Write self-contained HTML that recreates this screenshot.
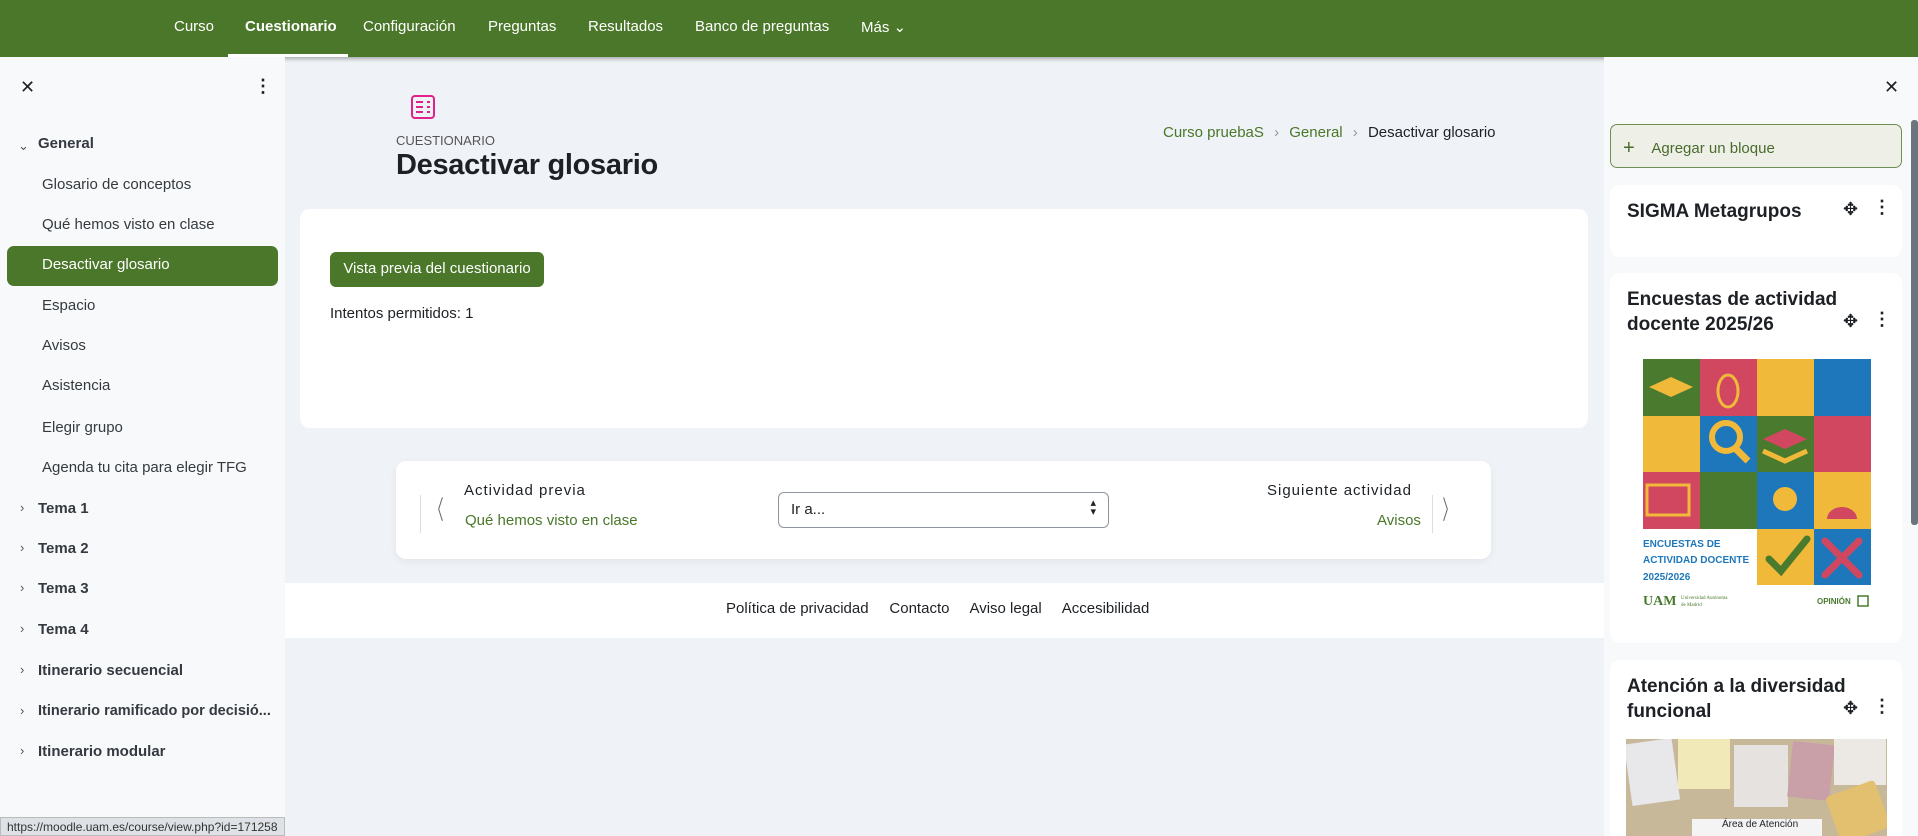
<!DOCTYPE html>
<html style="width:1918px;height:836px;overflow:hidden"><head><meta charset="utf-8">
<style>
*{box-sizing:border-box;margin:0;padding:0}
body{width:1918px;height:836px;overflow:hidden;background:#eff2f6;font-family:"Liberation Sans",sans-serif;color:#1d2125;position:relative}
.a{position:absolute;white-space:nowrap}
.nav{left:0;top:0;width:1918px;height:57px;background:#4a7729;box-shadow:0 2px 4px rgba(0,0,0,.3)}
.nav span{position:absolute;top:18px;color:#fff;font-size:15px}
.left{left:0;top:57px;width:285px;height:779px;background:#f8f9fa}
.li{font-size:15px;color:#343a40}
.sec{font-size:15px;font-weight:bold;color:#343a40}
.chev{font-size:13px;color:#555}
.right{left:1604px;top:57px;width:314px;height:779px;background:#f8f9fa}
.card{background:#fff;border-radius:10px}
.blk{background:#fff;border-radius:10px;left:1610px;width:292px}
.bt{font-size:19px;font-weight:bold;color:#1d2125;line-height:25px;white-space:normal}
.g{color:#4a7729}
</style></head><body>
<div class="a nav">
<span style="left:174px">Curso</span>
<span style="left:245px;font-weight:bold">Cuestionario</span>
<div class="a" style="left:228px;top:54px;width:120px;height:3px;background:#fff"></div>
<span style="left:363px">Configuración</span>
<span style="left:488px">Preguntas</span>
<span style="left:588px">Resultados</span>
<span style="left:695px">Banco de preguntas</span>
<span style="left:861px">Más ⌄</span>
</div>

<div class="a left"></div>
<div class="a" style="left:20px;top:77px;font-size:18px">✕</div>
<div class="a" style="left:254px;top:76px;font-size:18px;font-weight:bold">⋮</div>
<div class="a chev" style="left:18px;top:138px">⌄</div>
<div class="a sec" style="left:38px;top:135px">General</div>
<div class="a li" style="left:42px;top:176px">Glosario de conceptos</div>
<div class="a li" style="left:42px;top:216px">Qué hemos visto en clase</div>
<div class="a" style="left:7px;top:246px;width:271px;height:40px;background:#4a7729;border-radius:7px"></div>
<div class="a li" style="left:42px;top:256px;color:#fff">Desactivar glosario</div>
<div class="a li" style="left:42px;top:297px">Espacio</div>
<div class="a li" style="left:42px;top:337px">Avisos</div>
<div class="a li" style="left:42px;top:377px">Asistencia</div>
<div class="a li" style="left:42px;top:419px">Elegir grupo</div>
<div class="a li" style="left:42px;top:459px">Agenda tu cita para elegir TFG</div>
<div class="a chev" style="left:20px;top:500px">›</div><div class="a sec" style="left:38px;top:500px">Tema 1</div>
<div class="a chev" style="left:20px;top:540px">›</div><div class="a sec" style="left:38px;top:540px">Tema 2</div>
<div class="a chev" style="left:20px;top:580px">›</div><div class="a sec" style="left:38px;top:580px">Tema 3</div>
<div class="a chev" style="left:20px;top:621px">›</div><div class="a sec" style="left:38px;top:621px">Tema 4</div>
<div class="a chev" style="left:20px;top:662px">›</div><div class="a sec" style="left:38px;top:662px">Itinerario secuencial</div>
<div class="a chev" style="left:20px;top:703px">›</div><div class="a sec" style="left:38px;top:703px;font-size:14.5px">Itinerario ramificado por decisió...</div>
<div class="a chev" style="left:20px;top:743px">›</div><div class="a sec" style="left:38px;top:743px">Itinerario modular</div>
<div class="a" style="left:0;top:817px;width:285px;height:19px;background:#dee2e6;border:1px solid #bbb;font-size:12px;padding:2px 6px;color:#333">https://moodle.uam.es/course/view.php?id=171258</div>

<svg class="a" style="left:410px;top:94px" width="26" height="26" viewBox="0 0 26 26"><rect x="2" y="2" width="22" height="22" rx="3" fill="none" stroke="#e0218a" stroke-width="2"/><path d="M6 8h7M6 13h7M6 18h7M17 8h3M17 13h3M17 18h3" stroke="#e0218a" stroke-width="2"/></svg>
<div class="a" style="left:396px;top:133px;font-size:13px;color:#555">CUESTIONARIO</div>
<div class="a" style="left:396px;top:149px;font-size:29px;font-weight:bold;letter-spacing:-0.3px">Desactivar glosario</div>
<div class="a" style="left:1163px;top:124px;font-size:15px"><span class="g">Curso pruebaS</span> <span style="color:#999;margin:0 6px">›</span> <span class="g">General</span> <span style="color:#999;margin:0 6px">›</span> Desactivar glosario</div>

<div class="a card" style="left:300px;top:209px;width:1288px;height:219px"></div>
<div class="a" style="left:330px;top:252px;width:214px;height:35px;background:#4a7729;border-radius:6px;color:#fff;font-size:15px;padding-top:8px;text-align:center">Vista previa del cuestionario</div>
<div class="a" style="left:330px;top:305px;font-size:15px">Intentos permitidos: 1</div>

<div class="a card" style="left:396px;top:461px;width:1095px;height:98px;box-shadow:0 2px 8px rgba(0,0,0,.06)"></div>
<div class="a" style="left:424px;top:490px;font-size:26px;color:#666;font-weight:100;transform:scaleX(.5)">〈</div>
<div class="a" style="left:420px;top:495px;width:1px;height:38px;background:#ddd"></div>
<div class="a" style="left:464px;top:482px;font-size:15px;letter-spacing:1px">Actividad previa</div>
<div class="a g" style="left:465px;top:512px;font-size:15px">Qué hemos visto en clase</div>
<div class="a" style="left:778px;top:492px;width:331px;height:36px;border:1px solid #8f959e;border-radius:6px;font-size:15px;padding:8px 12px">Ir a...<span style="position:absolute;right:12px;top:6px;font-size:11px;line-height:9px">▴<br>▾</span></div>
<div class="a" style="left:1267px;top:482px;font-size:15px;letter-spacing:1px">Siguiente actividad</div>
<div class="a g" style="left:1377px;top:512px;font-size:15px">Avisos</div>
<div class="a" style="left:1432px;top:495px;width:1px;height:38px;background:#ddd"></div>
<div class="a" style="left:1436px;top:490px;font-size:26px;color:#666;transform:scaleX(.5)">〉</div>

<div class="a" style="left:285px;top:583px;width:1319px;height:55px;background:#fff"></div>
<div class="a" style="left:726px;top:600px;font-size:15px">Política de privacidad&nbsp;&nbsp;&nbsp;&nbsp; Contacto&nbsp;&nbsp;&nbsp;&nbsp; Aviso legal&nbsp;&nbsp;&nbsp;&nbsp; Accesibilidad</div>

<div class="a right"></div>
<div class="a" style="left:1884px;top:77px;font-size:18px">✕</div>
<div class="a" style="left:1610px;top:124px;width:292px;height:44px;border:1px solid #6e8f55;border-radius:7px;background:#eef0e8;font-size:15px;color:#4a6b2d;padding:11px 12px"><span style="font-size:20px;position:relative;top:1px">+</span>&nbsp;&nbsp;&nbsp;&nbsp;Agregar un bloque</div>
<div class="a" style="left:1911px;top:120px;width:7px;height:405px;background:#6c757d;border-radius:3px"></div>

<div class="a blk" style="top:185px;height:72px"></div>
<div class="a bt" style="left:1627px;top:199px">SIGMA Metagrupos</div>
<div class="a" style="left:1843px;top:199px;font-size:18px">✥</div><div class="a" style="left:1873px;top:197px;font-size:18px;font-weight:bold">⋮</div>

<div class="a blk" style="top:273px;height:370px"></div>
<div class="a bt" style="left:1627px;top:287px;width:220px">Encuestas de actividad docente 2025/26</div>
<div class="a" style="left:1843px;top:311px;font-size:18px">✥</div><div class="a" style="left:1873px;top:309px;font-size:18px;font-weight:bold">⋮</div>
<svg class="a" style="left:1643px;top:359px" width="228" height="250" viewBox="0 0 228 250">
<g>
<rect x="0" y="0" width="57" height="57" fill="#4a7a2e"/><rect x="57" y="0" width="57" height="57" fill="#d1475f"/><rect x="114" y="0" width="57" height="57" fill="#f0b93a"/><rect x="171" y="0" width="57" height="57" fill="#1f77bb"/>
<rect x="0" y="57" width="57" height="56" fill="#f0b93a"/><rect x="57" y="57" width="57" height="56" fill="#1f77bb"/><rect x="114" y="57" width="57" height="56" fill="#4a7a2e"/><rect x="171" y="57" width="57" height="56" fill="#d1475f"/>
<rect x="0" y="113" width="57" height="57" fill="#d1475f"/><rect x="57" y="113" width="57" height="57" fill="#4a7a2e"/><rect x="114" y="113" width="57" height="57" fill="#1f77bb"/><rect x="171" y="113" width="57" height="57" fill="#f0b93a"/>
<rect x="114" y="170" width="57" height="56" fill="#f0b93a"/><rect x="171" y="170" width="57" height="56" fill="#1f77bb"/>
</g>
<path d="M6 28l22-10 22 10-22 10z" fill="#f0b93a"/><ellipse cx="85" cy="32" rx="10" ry="16" fill="none" stroke="#f0b93a" stroke-width="3"/>
<circle cx="83" cy="78" r="14" fill="none" stroke="#f0b93a" stroke-width="6"/><path d="M93 90l12 12" stroke="#f0b93a" stroke-width="7"/>
<path d="M120 80l22-10 22 10-22 10z" fill="#d1475f"/><path d="M120 92l22 10 22-10" fill="none" stroke="#f0b93a" stroke-width="5"/>
<circle cx="142" cy="140" r="12" fill="#f0b93a"/><circle cx="199" cy="136" r="9" fill="#f0b93a"/><path d="M184 160a15 12 0 0 1 30 0z" fill="#d1475f"/>
<rect x="4" y="126" width="42" height="30" fill="none" stroke="#f0b93a" stroke-width="3"/>
<path d="M126 200l12 12 26-32" fill="none" stroke="#4a7a2e" stroke-width="7" stroke-linecap="round"/>
<path d="M182 182l34 34M216 182l-34 34" stroke="#d1475f" stroke-width="7" stroke-linecap="round"/>
<text x="0" y="188" font-family="Liberation Sans" font-weight="bold" font-size="10" fill="#1f77bb">ENCUESTAS DE</text>
<text x="0" y="204" font-family="Liberation Sans" font-weight="bold" font-size="10" fill="#1f77bb">ACTIVIDAD DOCENTE</text>
<text x="0" y="221" font-family="Liberation Sans" font-weight="bold" font-size="10" fill="#1f77bb">2025/2026</text>
<text x="0" y="246" font-family="Liberation Serif" font-weight="bold" font-size="14" fill="#4a7a2e">UAM</text>
<text x="38" y="240" font-family="Liberation Serif" font-size="5" fill="#4a7a2e">Universidad Autónoma</text>
<text x="38" y="247" font-family="Liberation Serif" font-size="5" fill="#4a7a2e">de Madrid</text>
<text x="174" y="245" font-family="Liberation Sans" font-weight="bold" font-size="8" fill="#4a7a2e">OPINIÓN</text>
<rect x="215" y="237" width="10" height="10" fill="none" stroke="#4a7a2e" stroke-width="1.5"/>
</svg>

<div class="a blk" style="top:660px;height:176px;border-radius:10px 10px 0 0"></div>
<div class="a bt" style="left:1627px;top:674px;width:230px">Atención a la diversidad funcional</div>
<div class="a" style="left:1843px;top:698px;font-size:18px">✥</div><div class="a" style="left:1873px;top:696px;font-size:18px;font-weight:bold">⋮</div>
<div class="a" style="left:1626px;top:739px;width:261px;height:97px;background:#c8b89a;overflow:hidden">
<div class="a" style="left:2px;top:2px;width:48px;height:62px;background:#e8e8ea;transform:rotate(-8deg)"></div>
<div class="a" style="left:52px;top:0;width:52px;height:50px;background:#f2e9b8"></div>
<div class="a" style="left:108px;top:6px;width:54px;height:62px;background:#e6e2e0"></div>
<div class="a" style="left:164px;top:4px;width:42px;height:56px;background:#c9a0a8;transform:rotate(6deg)"></div>
<div class="a" style="left:208px;top:0;width:52px;height:46px;background:#ece9e4"></div>
<div class="a" style="left:206px;top:48px;width:52px;height:50px;background:#e3c070;border-radius:4px;transform:rotate(-20deg)"></div>
<div class="a" style="left:66px;top:80px;width:130px;height:20px;background:#f4f4f4;font-size:10px;padding-left:30px">Área de Atención</div>
</div>
</body></html>
